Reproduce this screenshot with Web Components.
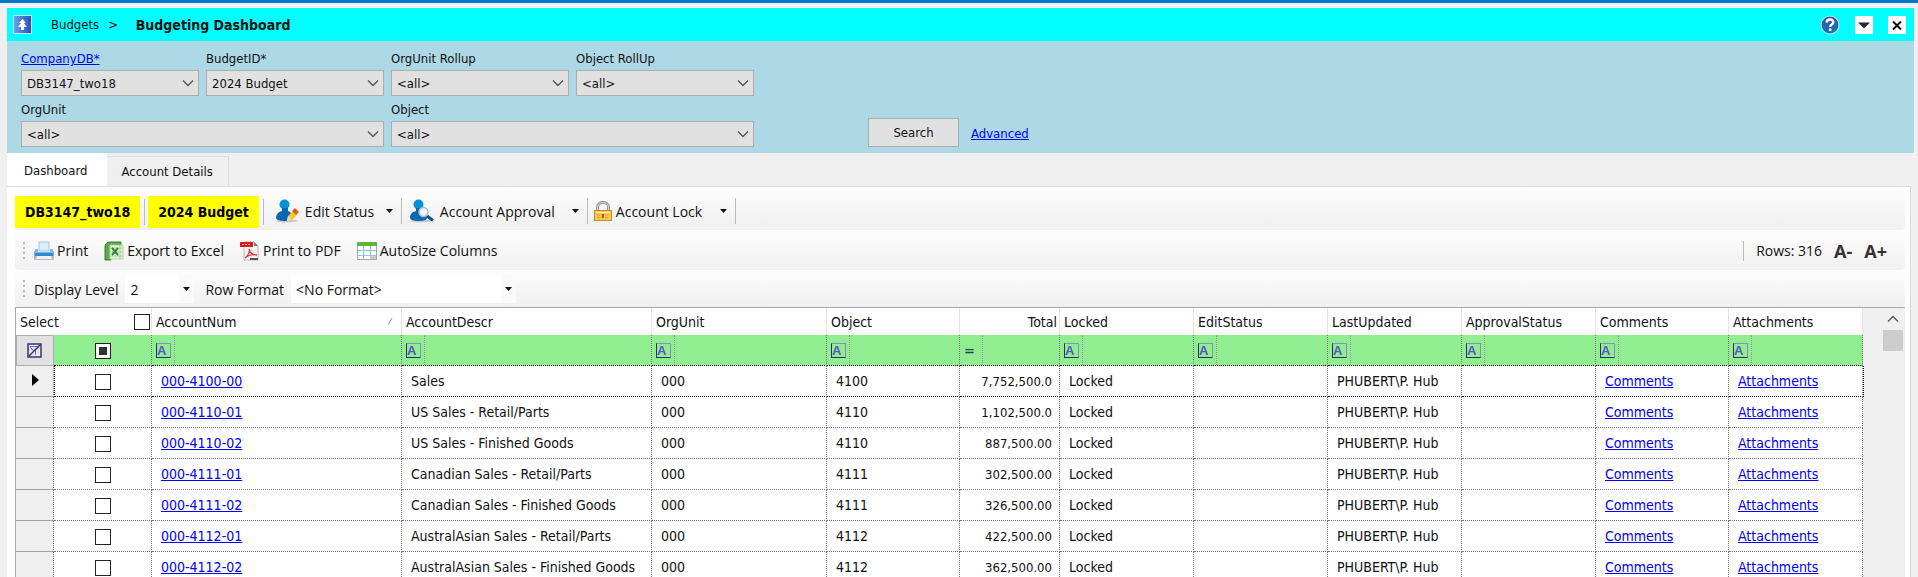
<!DOCTYPE html>
<html lang="en">
<head>
<meta charset="utf-8">
<title>Budgeting Dashboard</title>
<style>
  html, body {
    height: 100%;
  }
  body {
    margin: 0;
    overflow: hidden;
    background: #f0f0f0;
    color: #111;
    font: 13px "DejaVu Sans Condensed", "DejaVu Sans", sans-serif;
    --ui-font: "Open Sans", "Noto Sans", sans-serif;
    --link: #0000ff;
  }
</style>
</head>
<body>
<budget-app></budget-app>

<script>
// Small helper: every element clones its own template into an open root
function attach(el, html) {
  const template = document.createElement('template');
  template.innerHTML = html;
  el.attachShadow({ mode: 'open' });
  el.shadowRoot.appendChild(template.content.cloneNode(true));
}

const ICONS = {
  up: `<svg width="19" height="19" viewBox="0 0 19 19"><defs><linearGradient id="g" x1="0" x2="1"><stop offset="0" stop-color="#6fa0f0"/><stop offset="1" stop-color="#2850b0"/></linearGradient></defs><rect x=".5" y=".5" width="18" height="18" fill="url(#g)" stroke="#cfe6f8"/><path d="M9.500 4L13 8h-2l3 4h-3v3H8v-3H5l3-4H6z" fill="#fff"/></svg>`,
  help: `<svg width="20" height="20" viewBox="0 0 20 20"><defs><linearGradient id="h" x2="0" y2="1"><stop offset="0" stop-color="#4450a0"/><stop offset="1" stop-color="#0878b8"/></linearGradient></defs><circle cx="10" cy="10" r="9" fill="url(#h)" stroke="#b8e8f4" stroke-width="1.200"/><path d="M6.600 7.600C6.800 3.600 13.400 3.600 13.300 7.300C13.200 9.600 10.200 9.400 10.100 12" fill="none" stroke="#fff" stroke-width="2.400"/><circle cx="10.100" cy="14.800" r="1.500" fill="#fff"/></svg>`,
  down: `<svg width="18" height="18" viewBox="0 0 18 18"><rect width="18" height="18" fill="#fff"/><path d="M3 6.500h12L9 12.500z" fill="#2b2347"/></svg>`,
  close: `<svg width="18" height="18" viewBox="0 0 18 18"><rect width="18" height="18" fill="#fff"/><path d="M5 5.500l8 8M13 5.500l-8 8" stroke="#111" stroke-width="2"/></svg>`,
  edit: `<svg width="24" height="24" viewBox="0 0 24 24"><ellipse cx="12" cy="22" rx="11" ry="1.500" fill="#ccc"/><circle cx="9.500" cy="5.500" r="5" fill="#0a90d4"/><path d="M7 9h6v3c3 1 5 4 5 7c0 2-3 3-8 3s-9-1-9-3c0-3 2-6 6-7z" fill="#0868ae"/><path d="M12 22l1-5 5-5 4 4-5 5z" fill="#ffc72c"/><path d="M12 22l1-5 4 4z" fill="#f4dfb0"/><path d="M17 12l3-3 4 4-3 3z" fill="#d9602a"/></svg>`,
  approve: `<svg width="24" height="24" viewBox="0 0 24 24"><ellipse cx="11" cy="22" rx="11" ry="1.500" fill="#ccc"/><circle cx="8.500" cy="5.500" r="5" fill="#0a90d4"/><path d="M6 9h5v3c4 1 6 4 6 7c0 2-3 3-8 3s-9-1-9-3c0-4 2-6 6-7z" fill="#0868ae"/><path d="M17 17l6 4.500" stroke="#174c8c" stroke-width="3"/><circle cx="13.500" cy="13" r="4.500" fill="#eef4f8" stroke="#b4bcc4" stroke-width="1.500"/></svg>`,
  lock: `<svg width="18" height="20" viewBox="0 0 18 20"><path d="M3.500 11V6c0-6 11-6 11 0v5" fill="none" stroke="#999" stroke-width="3"/><path d="M3.500 11V6c0-6 11-6 11 0v5" fill="none" stroke="#d0d0d0"/><rect x=".5" y="9.500" width="17" height="10" fill="#f8c850" stroke="#d08c20"/><path d="M2 11.500h14" stroke="#fff0b0"/><path d="M3 14h12M3 16.500h12" stroke="#e0a030" stroke-dasharray="3 1"/><rect x="8" y="13" width="2" height="4" fill="#a86410"/></svg>`,
  print: `<svg width="20" height="20" viewBox="0 0 20 20"><path d="M5 1h10v9H5z" fill="#dceefa" stroke="#9cc4e0"/><path d="M1 8h3v3h12V8h3l1 3v5H0v-5z" fill="#7db9e4"/><path d="M1 12h18v3H1z" fill="#2f87cc"/><path d="M0 15h20v4H0z" fill="#b8bcc0"/><path d="M3 15h14l1 3H2z" fill="#f2f2f2"/></svg>`,
  excel: `<svg width="20" height="20" viewBox="0 0 20 20"><path d="M1 19V6c0-3 2-5 5-5h11v3H7v15z" fill="#5faa48" stroke="#3a7c2c"/><path d="M6 4h13v14H6z" fill="#e4f2de" stroke="#b4d4a8"/><path d="M7 7h12M7 11h12M7 15h12M16 4v14" stroke="#a8d09a"/><path d="M8 7l6 7M14 7l-6 7" stroke="#2f8a34" stroke-width="2"/></svg>`,
  pdf: `<svg width="20" height="20" viewBox="0 0 20 20"><path d="M4 1h10l4 4v14H4z" fill="#f3f3f3" stroke="#b8b8b8"/><path d="M14 1v4h4z" fill="#777"/><path d="M0 1h13v5H0z" fill="#e01818"/><path d="M2 3.500h9" stroke="#ffa8a8" stroke-dasharray="2 1"/><path d="M5 17c4-3 5-7 4-9c1 4 4 6 8 6c-4-1-8 0-11 2" fill="none" stroke="#d83838" stroke-width="1.300"/><path d="M10 17h8v2h-8z" fill="#555"/></svg>`,
  table: `<svg width="20" height="20" viewBox="0 0 20 20"><rect x=".5" y="1.500" width="19" height="17" fill="#fff" stroke="#a0a8b0"/><path d="M0 1h20v4H0z" fill="#5cb83c"/><path d="M1 9.500h18M1 14.500h18M6.500 5v13M13.500 5v13" stroke="#90c4e4"/><path d="M13 15h6v3h-6z" fill="#c8ccd0"/></svg>`,
  caret: `<svg width="7" height="4" viewBox="0 0 7 4"><path d="M0 0h7L3.500 4z" fill="#111"/></svg>`,
  chevron: `<svg width="12" height="8" viewBox="0 0 12 8"><path d="M1 1.500l5 5 5-5" fill="none" stroke="#555" stroke-width="1.400"/></svg>`,
  filter: `<svg width="15" height="15" viewBox="0 0 15 15"><rect x="1" y="1" width="13" height="13" fill="#e8e8f4" stroke="#35356e" stroke-width="1.500"/><path d="M3 3.500h9L8.500 7v5M3 3.500l3 4" fill="none" stroke="#6868c8"/><path d="M2 13L13 2" stroke="#35356e" stroke-width="1.500"/></svg>`
};

// Title band: up button, breadcrumb slot, window buttons
class TitleBand extends HTMLElement {
  constructor() {
    super();
    attach(this, `
      <style>
        :host { display: flex; align-items: center; height: 33px; padding: 0 8px 0 6px; background: #00ffff; }
        button { display: flex; padding: 0; border: 0; background: none; }
        .crumb { display: flex; align-items: center; flex: 1; gap: 9px; padding-left: 19px; white-space: pre; }
        .tools { display: flex; align-items: center; gap: 15px; }
      </style>
      <button aria-label="Up">${ICONS.up}</button>
      <div class="crumb"><slot></slot></div>
      <div class="tools">
        <button aria-label="Help">${ICONS.help}</button>
        <button aria-label="Menu">${ICONS.down}</button>
        <button aria-label="Close">${ICONS.close}</button>
      </div>
    `);
  }
}
customElements.define('title-band', TitleBand);

// Label over a drop-down
class FilterSelect extends HTMLElement {
  constructor() {
    super();
    const label = this.getAttribute('label');
    const text = this.hasAttribute('linked') ? `<a href="#">${label}</a>` : label;
    attach(this, `
      <style>
        :host { display: block; }
        :host([wide]) { grid-column: span 2; }
        label { display: block; padding-bottom: 3px; line-height: 16px; }
        a { color: var(--link); }
        .box { display: grid; align-items: center; }
        select, svg { grid-area: 1 / 1; }
        select {
          appearance: none; height: 26px; width: 100%; padding: 0 24px 0 5px;
          border: 1px solid #adadad; border-radius: 0; background: #e1e1e1; color: inherit; font: inherit;
        }
        svg { justify-self: end; margin-right: 5px; pointer-events: none; }
      </style>
      <label for="s">${text}</label>
      <div class="box">
        <select id="s"><option></option></select>
        ${ICONS.chevron}
      </div>
    `);
    this.shadowRoot.querySelector('option').textContent = this.getAttribute('value');
  }
}
customElements.define('filter-select', FilterSelect);

class FilterPanel extends HTMLElement {
  constructor() {
    super();
    attach(this, `
      <style>
        :host { display: flex; align-items: flex-end; padding: 10px 14px 6px; background: #add8e6; }
        .fields { display: grid; grid-template-columns: repeat(4, 178px); gap: 6px 7px; }
        button {
          width: 91px; height: 29px; margin: 0 12px 0 114px; padding: 0;
          border: 1px solid #adadad; background: #e1e1e1; color: inherit; font: inherit;
        }
        a { color: var(--link); line-height: 26px; }
      </style>
      <div class="fields"><slot></slot></div>
      <button>Search</button>
      <a href="#">Advanced</a>
    `);
  }
}
customElements.define('filter-panel', FilterPanel);

class TabStrip extends HTMLElement {
  constructor() {
    super();
    attach(this, `
      <style>
        :host { display: flex; align-items: flex-end; height: 33px; }
        button {
          height: 30px; padding: 0 15px 0 14px; border: 1px solid #dcdcdc; border-width: 1px 1px 0 0;
          background: #f0f0f0; color: inherit; font: inherit;
        }
        .active { height: 34px; margin-bottom: -1px; padding: 0 20px 0 17px; border: 0; background: #fff; }
      </style>
      <button class="active">Dashboard</button>
      <button>Account Details</button>
    `);
  }
}
customElements.define('tab-strip', TabStrip);

class ToolStrip extends HTMLElement {
  constructor() {
    super();
    attach(this, `
      <style>
        :host {
          display: flex; align-items: center; box-sizing: border-box; height: 39px; margin-bottom: 1px;
          border-radius: 0 4px 4px 4px; background: linear-gradient(#fdfdfd, #f0f0f0);
          font: 14px var(--ui-font); white-space: nowrap;
        }
        :host([tall]) { height: 42px; padding-top: 6px; }
        :host([short]) { height: 36px; margin-bottom: 0; }
        .grip {
          width: 2px; height: 18px; margin: 0 9px 0 8px;
          background: repeating-linear-gradient(#bbb 0 2px, transparent 2px 5px);
        }
        :host([tall]) .grip { display: none; }
      </style>
      <span class="grip"></span><slot></slot>
    `);
  }
}
customElements.define('tool-strip', ToolStrip);

class ToolButton extends HTMLElement {
  constructor() {
    super();
    const menu = this.hasAttribute('menu');
    attach(this, `
      <style>
        :host { display: block; }
        button {
          display: flex; align-items: center; gap: 3px; min-width: 100%; padding: 0;
          border: 0; background: none; color: inherit; font: inherit;
        }
        :host([menu]) button { gap: 6px; padding: 0 8px 2px; }
        :host([icon="lock"]) button { gap: 4px; padding-left: 6px; }
        .arrow { display: flex; margin-left: auto; }
      </style>
      <button>${ICONS[this.getAttribute('icon')]}<slot></slot>${menu ? `<span class="arrow">${ICONS.caret}</span>` : ''}</button>
    `);
  }
}
customElements.define('tool-button', ToolButton);

// Flat drop-down on a tool strip
class ToolSelect extends HTMLElement {
  constructor() {
    super();
    attach(this, `
      <style>
        :host { display: flex; align-items: center; gap: 7px; }
        .box { display: grid; align-items: center; width: var(--w); background: #fff; }
        select, .arrow { grid-area: 1 / 1; }
        select {
          appearance: none; width: 100%; height: 28px; padding: 0 16px 0 5px;
          border: 0; background: none; color: inherit; font: inherit;
        }
        .arrow { justify-self: end; display: flex; align-items: center; height: 28px; padding: 0 4px; background: #fafafa; pointer-events: none; }
      </style>
      <label for="s">${this.getAttribute('label')}</label>
      <div class="box">
        <select id="s"><option></option></select>
        <span class="arrow">${ICONS.caret}</span>
      </div>
    `);
    this.shadowRoot.querySelector('option').textContent = this.getAttribute('value');
  }
}
customElements.define('tool-select', ToolSelect);

const COLUMNS = [
  ['AccountNum', 250], ['AccountDescr', 250], ['OrgUnit', 175], ['Object', 133], ['Total', 100], ['Locked', 134],
  ['EditStatus', 134], ['LastUpdated', 134], ['ApprovalStatus', 134], ['Comments', 133], ['Attachments', 134]
];

const ROWS = [
  ['000-4100-00', 'Sales', '4100', '7,752,500.0'],
  ['000-4110-01', 'US Sales - Retail/Parts', '4110', '1,102,500.0'],
  ['000-4110-02', 'US Sales - Finished Goods', '4110', '887,500.00'],
  ['000-4111-01', 'Canadian Sales - Retail/Parts', '4111', '302,500.00'],
  ['000-4111-02', 'Canadian Sales - Finished Goods', '4111', '326,500.00'],
  ['000-4112-01', 'AustralAsian Sales - Retail/Parts', '4112', '422,500.00'],
  ['000-4112-02', 'AustralAsian Sales - Finished Goods', '4112', '362,500.00']
];

class DataGrid extends HTMLElement {
  constructor() {
    super();
    const cols = COLUMNS.map(c => `<col style="width:${c[1]}px">`).join('');
    const heads = COLUMNS.map(c => {
      if (c[0] === 'AccountNum') return `<th><div class="sorted">${c[0]}<svg width="6" height="9" viewBox="0 0 6 9"><path d="M1 8l4-7" stroke="#999"/></svg></div></th>`;
      return `<th class="${c[0] === 'Total' ? 'num' : ''}">${c[0]}</th>`;
    }).join('');
    const filters = COLUMNS.map(c => c[0] === 'Total'
      ? '<td><button class="op eq" aria-label="Total filter">=</button></td>'
      : `<td><button class="op" aria-label="${c[0]} filter"><span>A</span></button></td>`).join('');
    const rows = ROWS.map((r, i) => `
      <tr class="${i ? '' : 'current'}">
        <td class="mark">${i ? '' : '<svg width="7" height="12" viewBox="0 0 7 12"><path d="M0 0l7 6-7 6z" fill="#000"/></svg>'}</td>
        <td class="check"><input type="checkbox" aria-label="Select ${r[0]}"></td>
        <td><a href="#">${r[0]}</a></td><td>${r[1]}</td><td>000</td><td>${r[2]}</td><td class="num">${r[3]}</td>
        <td>Locked</td><td></td><td>PHUBERT\\P. Hub</td><td></td>
        <td><a href="#">Comments</a></td><td><a href="#">Attachments</a></td><td class="rest"></td>
      </tr>`).join('');

    attach(this, `
      <style>
        :host { display: flex; flex: 1; min-height: 0; overflow: hidden; border: 1px solid #a8a8a8; border-width: 1px 0 0 1px; background: #f0f0f0; font-size: 14px; }
        .view { flex: 1; min-width: 0; overflow: hidden; }
        table { width: 100%; table-layout: fixed; border-collapse: separate; border-spacing: 0; }
        th, td { box-sizing: border-box; padding: 0 0 0 9px; text-align: left; white-space: nowrap; overflow: hidden; background: #fff; }
        th { height: 27px; padding-left: 4px; font-weight: normal; border-right: 1px solid #e4e4e4; }
        td { height: 31px; border-right: 1px dotted #777; border-bottom: 1px dotted #777; }
        a { color: var(--link); }
        .num { text-align: right; padding: 0 7px 0 0; }
        td.num { font-size: 13px; }
        th.num { padding-right: 2px; }
        .select, .sorted { display: flex; align-items: center; justify-content: space-between; }
        .select { padding-right: 1px; }
        .sorted { padding-right: 8px; }
        .mark { padding: 0 0 0 16px; background: #f0f0f0; border-bottom: 1px solid #a0a0a0; }
        .check { padding: 0; text-align: center; }
        th.rest, .rest { background: #f0f0f0; border: 0; }
        input {
          appearance: none; width: 16px; height: 16px; margin: 0; vertical-align: middle;
          border: 1px solid #222; background: #fff; box-sizing: border-box;
        }
        input.some { padding: 3px; background: linear-gradient(#333, #333) content-box, #fff; }
        .filters td { padding: 0 0 0 4px; background: #90ee90; border-bottom-color: #000; }
        .filters td.mark { padding: 0 0 0 10px; background: #e1e1e1; border: 1px solid #adadad; }
        .filters td.check { padding: 0; }
        .filters td.rest { background: #f0f0f0; border: 0; }
        .filters .mark button { display: flex; padding: 0; border: 0; background: none; }
        .op { display: flex; align-items: center; height: 30px; padding: 0 3px 0 0; border: 0; border-right: 1px dotted #999; background: none; }
        .op span {
          width: 13px; height: 13px; border: 1px solid #8c8cc4; border-left: 1px solid #2c2c70; border-bottom: 1px solid #2c2c70;
          color: #5858c0; font: bold 13px/14px "Liberation Sans", sans-serif; text-align: left;
        }
        .eq { width: 19px; color: #333366; font: bold 13px "DejaVu Sans", sans-serif; }
        .current td { border-bottom-color: #000; }
        .current td.mark { border-bottom-color: #a0a0a0; }
        .current .check { border-left: 1px dotted #000; }
        .current td.rest { border-left: 1px dotted #000; border-bottom: 0; }
        .scroll { display: flex; flex-direction: column; width: 20px; margin-right: 2px; }
        .scroll button { display: flex; align-items: center; justify-content: center; height: 22px; padding: 0; border: 0; background: none; }
        .scroll svg { transform: rotate(180deg); }
        .thumb { height: 21px; background: #cdcdcd; }
      </style>
      <div class="view">
        <table>
          <colgroup><col style="width:38px"><col style="width:98px">${cols}<col></colgroup>
          <thead>
            <tr><th colspan="2"><label class="select">Select <input type="checkbox"></label></th>${heads}<th class="rest"></th></tr>
          </thead>
          <tbody>
            <tr class="filters">
              <td class="mark"><button aria-label="Clear filters">${ICONS.filter}</button></td>
              <td class="check"><input class="some" type="checkbox" aria-label="Selected filter"></td>
              ${filters}<td class="rest"></td>
            </tr>
            ${rows}
          </tbody>
        </table>
      </div>
      <div class="scroll"><button aria-label="Scroll up">${ICONS.chevron}</button><div class="thumb"></div></div>
    `);
  }
}
customElements.define('data-grid', DataGrid);

class BudgetApp extends HTMLElement {
  constructor() {
    super();
    attach(this, `
      <style>
        :host { display: flex; flex-direction: column; height: 100vh; box-sizing: border-box; padding: 5px 4px 0 7px; border-top: 3px solid #0078d0; }
        b { font-size: 14px; }
        .page {
          display: flex; flex-direction: column; flex: 1; min-height: 0; margin-right: 3px; padding: 1px 5px 0 8px;
          border: 1px solid #dcdcdc; border-width: 1px 1px 0 0; background: #fff;
        }
        .tag { padding: 0 10px; background: #ffff00; color: #000; font: bold 14px/32px "DejaVu Sans Condensed", sans-serif; }
        .sep { width: 1px; height: 26px; background: #bbb; margin-bottom: 3px; }
        .gap { margin: 0 3px 0 4px; }
        .plain { display: flex; gap: 16px; }
        .fields { display: flex; gap: 11px; }
        .size { padding: 0; border: 0; background: none; color: #333; font: bold 18px "Open Sans", sans-serif; }
        .right { display: flex; align-items: center; gap: 12px; margin: 0 18px 0 auto; }
        .right .sep { height: 20px; margin: 0; }
      </style>
      <title-band><span>Budgets</span><span>&gt;</span><b>  Budgeting Dashboard</b></title-band>
      <filter-panel>
        <filter-select label="CompanyDB*" value="DB3147_two18" linked></filter-select>
        <filter-select label="BudgetID*" value="2024 Budget"></filter-select>
        <filter-select label="OrgUnit Rollup" value="&lt;all&gt;"></filter-select>
        <filter-select label="Object RollUp" value="&lt;all&gt;"></filter-select>
        <filter-select label="OrgUnit" value="&lt;all&gt;" wide></filter-select>
        <filter-select label="Object" value="&lt;all&gt;" wide></filter-select>
      </filter-panel>
      <tab-strip></tab-strip>
      <div class="page">
        <tool-strip tall>
          <span class="tag">DB3147_two18</span><span class="sep gap"></span>
          <span class="tag">2024 Budget</span><span class="sep gap"></span>
          <tool-button icon="edit" menu style="min-width:134px">Edit Status</tool-button><span class="sep"></span>
          <tool-button icon="approve" menu style="min-width:185px">Account Approval</tool-button><span class="sep"></span>
          <tool-button icon="lock" menu style="min-width:147px">Account Lock</tool-button><span class="sep"></span>
        </tool-strip>
        <tool-strip>
          <div class="plain">
            <tool-button icon="print">Print</tool-button>
            <tool-button icon="excel">Export to Excel</tool-button>
            <tool-button icon="pdf">Print to PDF</tool-button>
            <tool-button icon="table">AutoSize Columns</tool-button>
          </div>
          <div class="right">
            <span class="sep"></span><span>Rows: 316</span>
            <button class="size">A-</button><button class="size">A+</button>
          </div>
        </tool-strip>
        <tool-strip short>
          <div class="fields">
            <tool-select label="Display Level" value="2" style="--w:69px"></tool-select>
            <tool-select label="Row Format" value="&lt;No Format&gt;" style="--w:225px"></tool-select>
          </div>
        </tool-strip>
        <data-grid></data-grid>
      </div>
    `);
  }
}
customElements.define('budget-app', BudgetApp);
</script>
</body>
</html>
